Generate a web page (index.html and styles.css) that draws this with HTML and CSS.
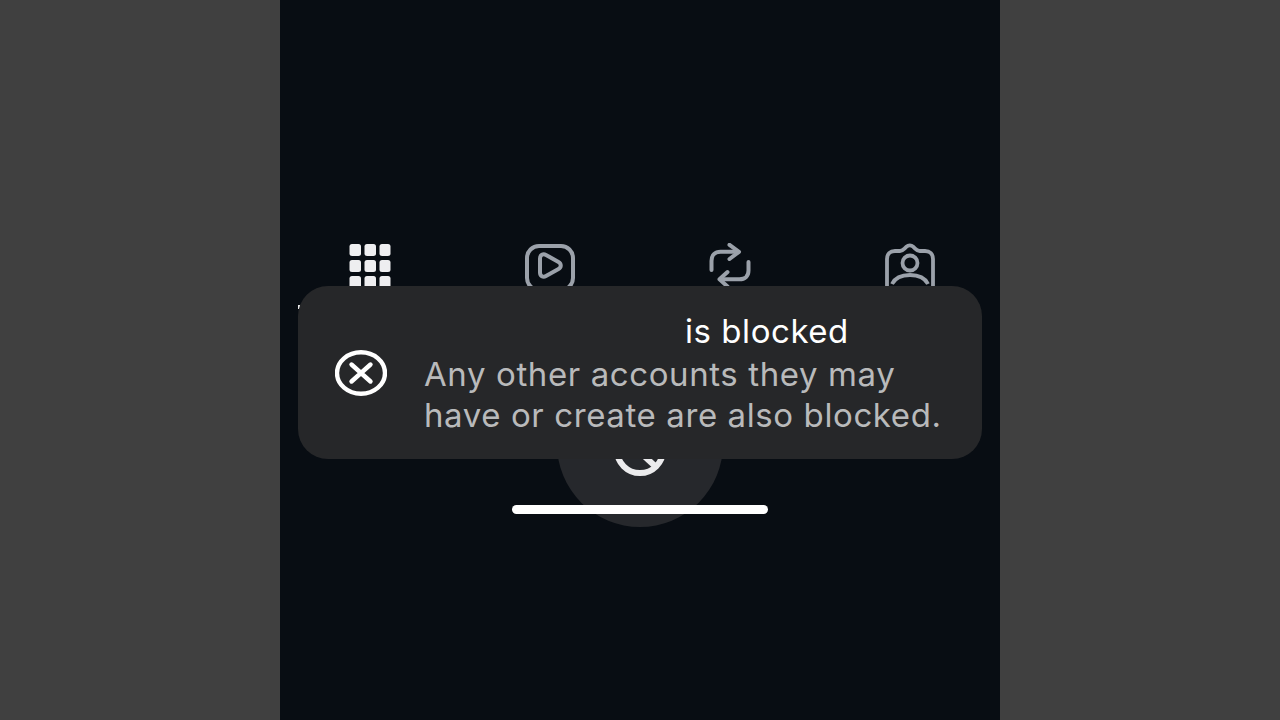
FILE: index.html
```html
<!DOCTYPE html>
<html lang="en">
<head>
<meta charset="utf-8">
<title>Blocked</title>
<link rel="stylesheet" href="styles.css">
</head>
<body>
<main class="phone">
  <nav class="tabs">
    <div class="tab">
      <svg class="grid-icon" width="42" height="44" viewBox="0 0 42 44"><g fill="#eeeef0"><rect x="0.500" y="1" width="11.500" height="12" rx="2.500"/><rect x="15.500" y="1" width="11.500" height="12" rx="2.500"/><rect x="30.500" y="1" width="11" height="12" rx="2.500"/><rect x="0.500" y="17" width="11.500" height="12" rx="2.500"/><rect x="15.500" y="17" width="11.500" height="12" rx="2.500"/><rect x="30.500" y="17" width="11" height="12" rx="2.500"/><rect x="0.500" y="33" width="11.500" height="12" rx="2.500"/><rect x="15.500" y="33" width="11.500" height="12" rx="2.500"/><rect x="30.500" y="33" width="11" height="12" rx="2.500"/></g></svg>
    </div>
    <div class="tab">
      <svg width="50" height="44" viewBox="0 0 50 44" fill="none" stroke="#9ba1aa" stroke-width="4" stroke-linejoin="round"><rect x="2" y="3" width="46" height="44" rx="12"/><path d="M15 15.500c0-3.500 3-5.200 6-3.600l12.500 7c3 1.700 3 5.500 0 7.200L21 33.100c-3 1.600-6-.1-6-3.600z"/></svg>
    </div>
    <div class="tab">
      <svg width="42" height="44" viewBox="0 0 42 44" fill="none" stroke="#9ba1aa" stroke-width="4" stroke-linecap="round" stroke-linejoin="round"><path d="M2.500 27v-9c0-6 3.500-9.300 9-9.300H29"/><path d="M20.500 1.800l9.500 7-9.500 7.200"/><path d="M39.500 19v8.500c0 5.500-3.500 8.800-9 8.800H12"/><path d="M18.500 29l-8 7.300 8 7.200"/></svg>
    </div>
    <div class="tab">
      <svg width="50" height="44" viewBox="0 0 50 44" fill="none" stroke="#9ba1aa" stroke-width="3.800" stroke-linejoin="round"><path d="M2 50V16c0-5 3-8 8-8h5c2 0 3-.8 4.500-2.300l2-2c1.800-1.700 4.800-1.700 6.600 0l2 2c1.500 1.500 2.500 2.300 4.500 2.300H40c5 0 8 3 8 8v34"/><circle cx="25" cy="20" r="7.500"/><path d="M7 41c3-6 10-9 18-9s15 3 18 9"/></svg>
    </div>
  </nav>

  <span class="speck"></span>

  <div class="fab"></div>
  <svg class="search-arc" width="60" height="40" viewBox="0 0 60 40" fill="none" stroke="#ebebed" stroke-width="6"><circle cx="30" cy="10" r="23"/><path d="M33 15l12 11"/></svg>
  <div class="home-bar"></div>

  <section class="toast">
    <svg class="toast-icon" width="52" height="46" viewBox="0 0 52 46" fill="none" stroke="#fff"><ellipse cx="26" cy="23" rx="24" ry="20.800" stroke-width="4.400"/><path d="M16.500 14.500l19 17M35.500 14.500l-19 17" stroke-width="4.400" stroke-linecap="round"/></svg>
    <div class="toast-text">
      <p class="toast-title">is blocked</p>
      <p class="toast-body">Any other accounts they may<br>have or create are also blocked.</p>
    </div>
  </section>
</main>
</body>
</html>
```

FILE: styles.css
```css
* { box-sizing: border-box; }

html, body {
  margin: 0;
  height: 720px;
  overflow: hidden;
}

body {
  display: flex;
  justify-content: center;
  background: #404040;
  font-family: Inter, "Noto Sans", sans-serif;
}

.phone {
  position: relative;
  width: 720px;
  height: 720px;
  background: #080d13;
  overflow: hidden;
}

.tabs {
  display: grid;
  grid-template-columns: repeat(4, 180px);
  padding-top: 243px;
}

.tab {
  display: flex;
  justify-content: center;
  height: 43px;
  overflow: hidden;
}

.tab svg { flex: none; display: block; }

.speck {
  position: absolute;
  left: 18px;
  top: 305px;
  width: 2px;
  height: 4px;
  background: #e8e8e8;
}

.fab {
  position: absolute;
  left: 277px;
  top: 361px;
  width: 166px;
  height: 166px;
  border-radius: 50%;
  background: #26282c;
}

.search-arc {
  position: absolute;
  left: 330px;
  top: 440px;
}

.home-bar {
  position: absolute;
  left: 232px;
  top: 505px;
  width: 256px;
  height: 9px;
  border-radius: 5px;
  background: #fff;
}

.toast {
  position: absolute;
  left: 18px;
  top: 286px;
  width: 684px;
  height: 173px;
  border-radius: 30px;
  background: #262729;
  display: flex;
  align-items: center;
  padding-left: 37px;
  gap: 37px;
}

.toast-icon { flex: none; }

.toast-text {
  display: flex;
  flex-direction: column;
}

.toast-title {
  margin: 0 0 2px 261px;
  font-size: 33px;
  line-height: 42px;
  letter-spacing: 0.55px;
  color: #fff;
}

.toast-body {
  margin: 0;
  font-size: 33px;
  line-height: 41px;
  color: #b9babb;
  letter-spacing: 0.6px;
  white-space: nowrap;
}
```
